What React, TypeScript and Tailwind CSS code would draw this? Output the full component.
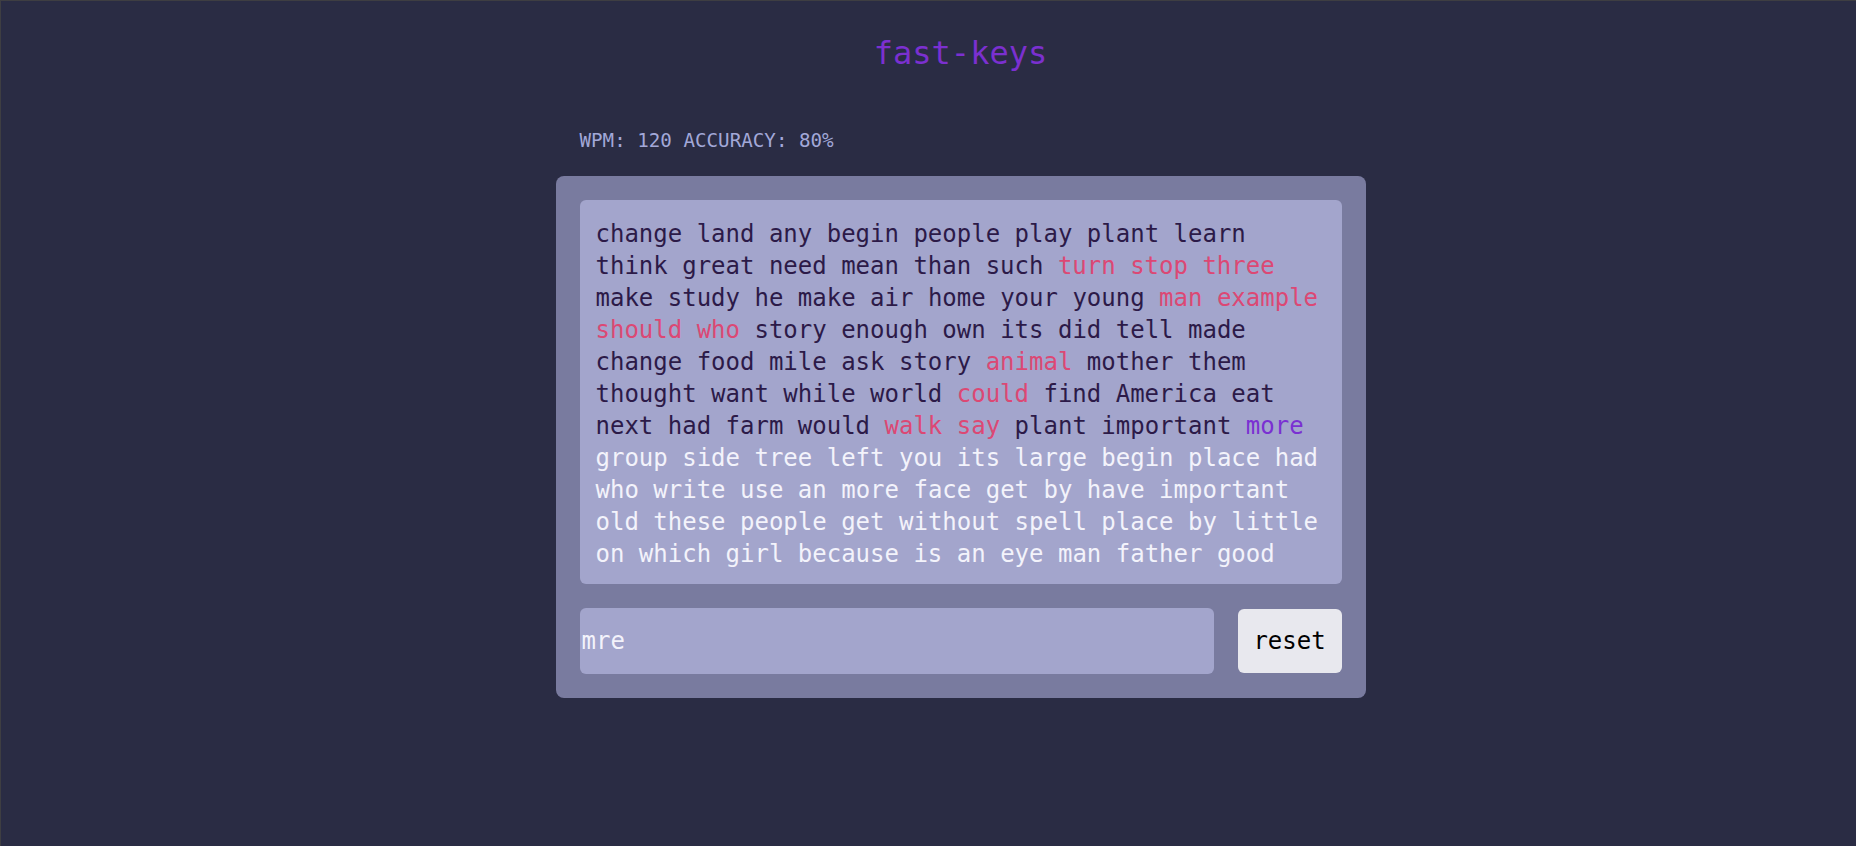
import React from "react";

type Status = "done" | "wrong" | "current" | "todo";

const segments: [Status, string][] = [
  ["done", "change land any begin people play plant learn think great need mean than such"],
  ["wrong", "turn stop three"],
  ["done", "make study he make air home your young"],
  ["wrong", "man example should who"],
  ["done", "story enough own its did tell made change food mile ask story"],
  ["wrong", "animal"],
  ["done", "mother them thought want while world"],
  ["wrong", "could"],
  ["done", "find America eat next had farm would"],
  ["wrong", "walk say"],
  ["done", "plant important"],
  ["current", "more"],
  [
    "todo",
    "group side tree left you its large begin place had who write use an more face get by have important old these people get without spell place by little on which girl because is an eye man father good",
  ],
];

const words: { w: string; s: Status }[] = segments.flatMap(([s, t]) =>
  t.split(" ").map((w) => ({ w, s }))
);

const colorClass: Record<Status, string> = {
  done: "text-[#2c1a48]",
  wrong: "text-[#dc4874]",
  current: "text-[#7a30d2]",
  todo: "text-[#f3f3fb]",
};

const mono = "font-['DejaVu_Sans_Mono','Liberation_Mono',monospace]";

export default function App() {
  return (
    <div
      className={`min-h-[846px] bg-[#2a2c44] border-t border-l border-[#3e3e42] flex flex-col items-center pl-[64px] ${mono}`}
    >
      <h1 className="mt-[32px] text-[32px] leading-[40px] text-[#7b30d0]">fast-keys</h1>
      <div className="w-[810px] mt-[54px] flex flex-col">
        <div className="pl-6 text-[19.2px] leading-[28px] text-[#a2a8d8]">
          WPM: 120 ACCURACY: 80%
        </div>
        <div className="mt-[21px] bg-[#797b9f] rounded-lg p-6 flex flex-col gap-6">
          <div className="bg-[#a3a5cc] rounded-md px-4 pt-[18px] pb-[14px] text-[24px] leading-[32px]">
            {words.map((x, i) => (
              <React.Fragment key={i}>
                <span className={colorClass[x.s]}>{x.w}</span>
                {i < words.length - 1 ? " " : ""}
              </React.Fragment>
            ))}
          </div>
          <div className="flex items-center gap-6">
            <input
              defaultValue="mre"
              className={`flex-1 h-[66px] rounded-md bg-[#a3a5cc] text-[#f3f3fb] text-[24px] px-[2px] outline-none ${mono}`}
            />
            <button
              className={`w-[104px] h-[64px] rounded-md bg-[#e8e8ee] text-black text-[24px] ${mono}`}
            >
              reset
            </button>
          </div>
        </div>
      </div>
    </div>
  );
}
